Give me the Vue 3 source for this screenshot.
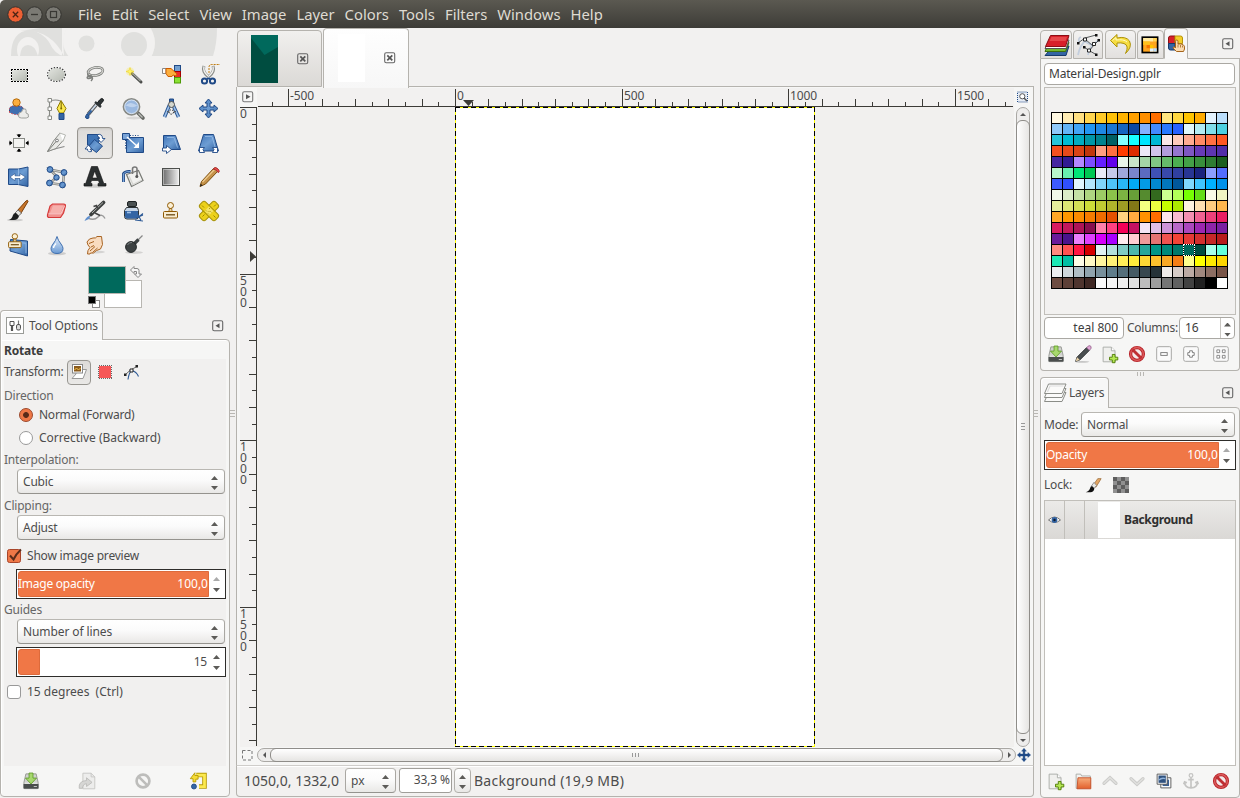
<script setup>
const menus = ['File', 'Edit', 'Select', 'View', 'Image', 'Layer', 'Colors', 'Tools', 'Filters', 'Windows', 'Help']

const blue = 'fill="url(#gBlue)" stroke="#204a87"'
const stampTop = '<circle cx="11.500" cy="6.500" r="3" fill="#fbf0d6" stroke="#8f5902"/><path d="M10.500 9.500h2l1 4h-4z" fill="#e9d3a0" stroke="#8f5902" stroke-width=".8"/><rect x="4.500" y="12.500" width="14" height="6.500" rx="1" fill="#f8ecd0" stroke="#8f5902"/><path d="M7 15.800h9" stroke="#6b4a12" stroke-width="1.300"/>'

const icons = {
  rectSelect: '<rect x="4" y="6" width="17" height="13" fill="#fff"/><rect x="5" y="7" width="15" height="11" fill="url(#gGrey)"/><path d="M4 6.500h17M4 18.500h17M4.500 6v13M20.500 6v13" stroke="#000" stroke-dasharray="2 1" shape-rendering="crispEdges"/>',
  ellipseSelect: '<ellipse cx="11.500" cy="11.500" rx="9" ry="7" fill="url(#gGrey)" stroke="#fff"/><ellipse cx="11.500" cy="11.500" rx="9" ry="7" fill="none" stroke="#333" stroke-dasharray="1.400 1.500" stroke-width="1.100"/>',
  lasso: '<ellipse cx="12.500" cy="8.500" rx="7.500" ry="4" fill="none" stroke="#7d7f7c" stroke-width="2.600" transform="rotate(-10 12.500 8.500)"/><ellipse cx="12.500" cy="8.500" rx="7.500" ry="4" fill="none" stroke="#dcdcd8" stroke-width="1" transform="rotate(-10 12.500 8.500)"/><path d="M5 10c-1 3 1 4 3 4s2 2 0 4M7 12.500c-3 .5-4 3-1 3s4-3 1-3" fill="none" stroke="#7d7f7c" stroke-width="1.500"/>',
  wand: '<path d="M11 10.500l9 8.500" stroke="#4b4d4a" stroke-width="3" stroke-linecap="round"/><path d="M11.500 10.500l8 7.500" stroke="#a5a7a2" stroke-width="1.100"/><circle cx="9" cy="8.500" r="4" fill="#fce94f" opacity=".35"/><path d="M9 4.500l1 3 3 1-3 1-1 3-1-3-3-1 3-1z" fill="#fff36b" stroke="#e8cf1c" stroke-width=".5"/>',
  byColor: '<rect x="15.500" y="2.500" width="6" height="6" fill="#729fcf" stroke="#204a87"/><rect x="15.500" y="8.500" width="6" height="6" fill="#ef2929" stroke="#a40000"/><rect x="15.500" y="14.500" width="6" height="5.500" fill="#8ae234" stroke="#4e9a06"/><path d="M3.500 5.500h3.500v5h-3.500z" fill="#fff" stroke="#888"/><path d="M7 5.500h5l6 5.500-1 2-3-1-1 1.500H9L7 10.500z" fill="#fcaf3e" stroke="#ce5c00"/>',
  scissors: '<path d="M7 3c-1.500 4 1 8 4 10.500M16 3c1.500 4-1 8-4 10.500" fill="none" stroke="#8b8d89" stroke-width="3"/><path d="M7 3.500c-1 4 1 7 4 9.500M16 3.500c1 4-1 7-4 9.500" fill="none" stroke="#f2f2f0" stroke-width="1.400"/><path d="M12 10V4q0-2.500 3-2.500h8" fill="none" stroke="#c17d11" stroke-dasharray="2 1"/><circle cx="7.500" cy="18" r="2.600" fill="none" stroke="#204a87" stroke-width="2"/><circle cx="15.500" cy="18" r="2.600" fill="none" stroke="#204a87" stroke-width="2"/><path d="M10 15.500h3" stroke="#204a87" stroke-width="2"/>',
  fgSelect: '<path d="M2.500 15.500v-4q1-2.500 5-2.500h4q4 0 5 3v5q-7 2-14-1.500z" fill="#3f6fb0" stroke="#c4404a" stroke-dasharray="1.500 1.500"/><path d="M2.500 15.500v-4q1-2.500 5-2.500h4q4 0 5 3" fill="none" stroke="#204a87" stroke-dasharray="1.500 1.500" stroke-dashoffset="1.500"/><circle cx="9.500" cy="5.500" r="3.700" fill="#fcaf3e" stroke="#b46a0c"/><path d="M11.500 19q-.5-4 3-4 1-4.500 4-3 1 1 .5 4 3 0 2.500 4-1 1.500-7 1-3 0-3-2z" fill="#ececea" stroke="#a0a29e"/>',
  paths: '<path d="M4.500 3.500v17M5 3.500q11-2 12 3" fill="none" stroke="#888a85" stroke-width="1.100"/><path d="M3 1.500h3.500v3.500H3zM3 10h3.500v3.500H3zM3 19h3.500v3.500H3z" fill="#fff" stroke="#888a85"/><path d="M16 3.500l-4 8 2.500 4.500h4l2.500-4.500z" fill="#fce94f" stroke="#8f7a00"/><path d="M16.200 5v6" stroke="#7a6800"/><circle cx="16.200" cy="11.500" r="1" fill="#7a6800"/><path d="M14 16.500h5v6h-5z" fill="#3465a4" stroke="#204a87"/>',
  picker: '<path d="M13.500 7l3-4q2-2.500 3.500-1t-1 3.500l-3 3.500z" fill="#2e3436" stroke="#15191a"/><path d="M12 5l6 5" stroke="#2e3436" stroke-width="2.400"/><path d="M13 8l-8 9.500" stroke="#555" stroke-width="3.600"/><path d="M13 8l-8 9.500" stroke="#c9d8e8" stroke-width="1.800"/><path d="M8.500 13.500l-3.500 4" stroke="#3465a4" stroke-width="2"/><path d="M4 17q-3 4 0 4.500t1.500-3.500z" fill="#3465a4" stroke="#204a87"/>',
  zoom: '<ellipse cx="13" cy="21" rx="8" ry="1.500" fill="#000" opacity=".1"/><path d="M17 16l5 5" stroke="#666864" stroke-width="3.600" stroke-linecap="round"/><path d="M17.500 16.500l4 4" stroke="#bcbeb9" stroke-width="1.200"/><circle cx="10.500" cy="9.800" r="8" fill="#9bb9e0" stroke="#888a85" stroke-width="1.800"/><circle cx="10.500" cy="9.800" r="6.800" fill="none" stroke="#dfe9f5" stroke-width=".9"/><path d="M4.800 8.500q4-5 11.400 0-4 3.500-11.400 0z" fill="#c8daf0" opacity=".8"/>',
  measure: '<path d="M10.500 2h4v6h-4z" fill="#3465a4" stroke="#204a87"/><path d="M10.500 8L5.500 20M14 8l5.500 12" stroke="#2d5a96" stroke-width="3.600"/><path d="M10.500 8L5.500 20M14 8l5.500 12" stroke="#9fc0e8" stroke-width="1.600"/><path d="M8 14.500q4.500 2.500 9 0" fill="none" stroke="#555"/><circle cx="12.500" cy="7.500" r="3" fill="#d3d7cf" stroke="#555"/><circle cx="12.300" cy="15" r="2.200" fill="#eee" stroke="#333" stroke-dasharray="1.500 1"/>',
  move: `<path d="M11.500 2l3.500 4h-2v4h4V8l4 3.500-4 3.500v-2h-4v4h2l-3.500 4L8 17h2v-4H6v2l-4-3.500L6 8v2h4V6H8z" ${blue}/>`,
  align: '<rect x="6.500" y="7.500" width="11" height="9" fill="#f4f4f2" stroke="#888a85"/><path d="M12 3v3M12 18v3M2 12h3M19 12h3" stroke="#000" stroke-width="1.200"/><path d="M12 6.500l-2.500-3h5zM12 17.500l-2.500 3h5zM5.500 12l-3-2.500v5zM18.500 12l3-2.500v5z" fill="#000"/>',
  crop: '<path d="M2.500 20.500l5-2 12-3" stroke="#888" stroke-width="1.200" fill="none"/><path d="M2.500 20.500l6-10.500L15 2l3.500 7-7.500 8.500z" fill="#e9e9e6" stroke="#8a8c87"/><path d="M2.500 20.500l9-10.500" stroke="#7e807b"/><circle cx="12" cy="9.500" r="1.400" fill="#fff" stroke="#777"/><path d="M14.500 2l6 2-2.500 6.500" fill="#fff" stroke="#b5b7b2"/>',
  rotate: `<path d="M4.500 3.500h11.500v7l-3 5-8.500-1.500z" fill="#3f74b5" stroke="#204a87"/><path d="M11.500 8.500l8 6.500-6 6.500-8-6z" ${blue}/><path d="M14.500 3.500q5-1 5 4h2.500l-4 4-3.500-4h2q0-2-2-2zM8.500 20.500q-4 1-4-2.500H2l3.500-4 3.500 4H7q0 1 1.500 1z" fill="#fff" stroke="#204a87" stroke-width=".9"/>`,
  scale: `<path d="M5.500 6.500h17v15h-17z" ${blue}/><path d="M9 4.500h9M4.500 9v9" stroke="#204a87" stroke-dasharray="1 1.500"/><path d="M1.500 2.500h7v6h-7z" fill="#7aa4d8" stroke="#204a87"/><path d="M6 6l11 10" stroke="#fff" stroke-width="1.500"/><path d="M12.500 17h5.500v-6z" fill="#fff"/>`,
  shear: `<path d="M4.500 4.500h12l5 14h-17z" ${blue}/><path d="M8 6.500h7l3.500 10" fill="none" stroke="#8db4e2"/><path d="M3.500 17h4v-2.500l5 4-5 4V20h-4z" fill="#fff" stroke="#204a87" stroke-width=".9"/>`,
  perspective: `<path d="M6.500 3.500h10l5 16.500h-20z" ${blue}/><path d="M8 5.500h7l3.500 12" fill="none" stroke="#8db4e2"/><path d="M2.500 16.500h5l-1.500 2 1.500 3H2.500zM20.500 16.500h-5l1.500 2-1.500 3h5z" fill="#fff" stroke="#204a87" stroke-width=".9"/>`,
  flip: `<path d="M1.500 4h10l9.500-2v19.500L11 19.500H1.500z" ${blue}/><path d="M11.500 4v15.500" stroke="#8db4e2"/><path d="M8 8.500v2.300h5V8.500l5.500 3.500-5.500 3.800v-2.300H8v2.300L3 12z" fill="#fff" stroke="#204a87" stroke-width=".6"/>`,
  cage: `<path d="M5 4.500l14 3-1 12.500-13-2L12 12z" fill="none" stroke="#888a85" stroke-width="2.600"/><path d="M5 4.500l14 3-1 12.500-13-2L12 12z" fill="none" stroke="#ddd" stroke-width=".8"/><g ${blue}><circle cx="5" cy="4.500" r="2.900"/><circle cx="19" cy="7.500" r="2.900"/><circle cx="11.500" cy="12.500" r="2.700"/><circle cx="4.500" cy="18" r="2.900"/><circle cx="17.500" cy="20" r="2.900"/></g>`,
  text: '<ellipse cx="12" cy="21" rx="11" ry="1.800" fill="#000" opacity=".15"/><path d="M8.500 1.500h6l6.300 17H23V21h-8v-2.500h1.500l-1-3h-7l-1 3H9V21H1v-2.500h1.700zM11.700 6l-2.400 7h5z" fill="#2b2f30" stroke="#111" stroke-width=".6" fill-rule="evenodd"/>',
  bucket: '<path d="M2.500 17V8.500q2-2.500 7-2" fill="none" stroke="#204a87" stroke-width="2.800"/><path d="M2.500 17V8.500q2-2.500 7-2" fill="none" stroke="#7aa4d8" stroke-width="1"/><path d="M5.500 9.500L17.500 5.500l4.500 10L10.500 21.500z" fill="#f1f1ef" stroke="#777974" stroke-width="1.200"/><path d="M8 11l4 8.500 8-4" stroke="#d5d5d2" stroke-width="1.300" fill="none"/><path d="M11.500 9V4q0-2 2.300-2T16 4v7" fill="none" stroke="#777" stroke-width="1.600"/><circle cx="15.800" cy="11.500" r="1.500" fill="#555"/>',
  gradient: '<rect x="3.500" y="3.500" width="17" height="17" fill="url(#gBlend)" stroke="#4d4f4c"/><rect x="4.500" y="4.500" width="15" height="15" fill="none" stroke="#fff" opacity=".4"/>',
  pencil: '<path d="M3 21.500l1.500-5L17 3q3-1 4.500 2.500L8.500 19z" fill="#c4924a" stroke="#7a4d0c"/><path d="M5.500 17L17.500 4.500" stroke="#eecb8e" stroke-width="1.200"/><path d="M16 4q2.500-3 5 0t0 3.500q-1-3-5-3.500z" fill="#ef4a4a" stroke="#a33"/><path d="M3 21.500l.8-2.700 1.800 1.800z" fill="#222"/>',
  brush: '<ellipse cx="8" cy="21" rx="8" ry="1.300" fill="#000" opacity=".15"/><path d="M10 12L19 2q2-1.500 2 .5L13.500 15z" fill="#c9762b" stroke="#7a3e08"/><path d="M8 14l3-3 3.500 3-3 3z" fill="#e3e3e0" stroke="#777"/><path d="M2 21q3-1 4-5 1-2.500 3-2l3 3q-1 4-5 4z" fill="#1b1e1f"/>',
  lockBrush: '<path d="M11 12L17 3.500h4.500L14.500 15z" fill="#e3a766" stroke="#9a6a35"/><path d="M8.500 13.500l3.500-5 3.500 4-3.500 4z" fill="#e9e9e6" stroke="#777"/><path d="M1 21.500q5-2 6-6 1-2.500 3-1.500l2.500 2.500q-1 5-5 5z" fill="#111"/>',
  eraser: '<path d="M7.500 5h11q2.500 0 1.800 2.500L18.500 14l-3 4.500H4.500q-2.500 0-2-2.500L5 7z" fill="#f0918e" stroke="#d63a3a" stroke-width="1.200"/><path d="M8 6.500h10.500l-3 7.500H5z" fill="#f6b0ac"/><path d="M3.500 14.800h12.500L19.500 7" fill="none" stroke="#fbd3d1" stroke-width=".9"/>',
  airbrush: '<path d="M5 19q6 3 10-1t7 1.500" fill="none" stroke="#999" stroke-width="1.400"/><path d="M8 15.500L20.500 3.500" stroke="#3d403f" stroke-width="3.800" stroke-linecap="round"/><path d="M9 14L20 3.500" stroke="#b4b6b2" stroke-width="1"/><path d="M10.500 7.500l3-1 1 3M12 14l5 2.500" stroke="#444" stroke-width="1.600" fill="none"/><path d="M1.500 22q2.500-5.500 6-5l-1.500 3z" fill="#5f8fcd"/>',
  ink: '<rect x="6.500" y="2.500" width="9" height="5" rx="1.500" fill="#4a5152" stroke="#1d2223"/><path d="M5.500 8.500h11l1 3v6q0 2.500-2.500 2.500H6q-2.500 0-2.500-2.500v-6z" fill="#c8d6e6" stroke="#2e3436"/><path d="M4 12h13v5.500q0 2-2 2H6q-2 0-2-2z" fill="#3465a4"/><path d="M6 13.500h4" stroke="#9fc0e8" stroke-width="1.600"/><path d="M15 19l7-3M17 15.500l3 6M14 21l8 1M22 14.500l-5 4" stroke="#2d5a96" stroke-width="1.100"/>',
  stamp: stampTop,
  heal: '<g stroke="#a8930a" fill="#ecd11b"><rect x="1" y="8" width="22" height="8" rx="2.500" transform="rotate(-45 12 12)"/><rect x="1" y="8" width="22" height="8" rx="2.500" transform="rotate(45 12 12)"/></g><path d="M12 7.500l4.500 4.500-4.500 4.500L7.500 12z" fill="#f4e366"/><path d="M9 11.500l.8.800M12 9l.8.800M11.500 12l.8.800M13.500 12.500l.8.800M11 14.500l.8.800M5 6.500l2 2M16.500 16.500l2 2M5.500 17.500l2-2M17 7.500l2-2" stroke="#a08a00"/>',
  perspClone: `<path d="M3.500 6.500L20.500 8v15L3 18z" ${blue}/><path d="M13 9.500l6 .8v10" fill="none" stroke="#8db4e2"/><g transform="translate(-2.500 -2.500) scale(.9)">${stampTop}</g>`,
  blur: '<ellipse cx="12" cy="20.500" rx="9" ry="1.800" fill="#000" opacity=".15"/><path d="M12 3.500q1 4 4 7.500 2 2.500 2 4.500 0 5-6 5t-6-5q0-2 2-4.500 3-3.500 4-7.500z" fill="url(#gDrop)" stroke="#3f6faf"/><path d="M8.500 15q0-2 2.500-4.500" stroke="#fff" stroke-width="1.300" fill="none"/>',
  smudge: '<ellipse cx="13" cy="19" rx="9" ry="1.500" fill="#000" opacity=".12"/><path d="M4 9q2-4 6-4 3 .5 4-1.500h4.500l1 8-2 4.500-4 1.500-3 2.500H7.500l-.5 1H4.500l.5-3.500 2-3-2-2.500z" fill="#f9dcc0" stroke="#a86423"/><path d="M8 14l3-1.500M7 18l5-4.500M9.500 19.500l5-4.500M6 10.500l5-2" stroke="#a86423"/>',
  dodge: '<ellipse cx="13" cy="19.500" rx="9" ry="1.500" fill="#000" opacity=".12"/><path d="M12 12l9.500-9.500" stroke="#888" stroke-width="1.200"/><path d="M12 12l5.500-5.500" stroke="#3c4142" stroke-width="3.200"/><circle cx="10" cy="14" r="5.400" fill="#3c4142" stroke="#222627"/><path d="M6.500 12q1.500-3 4.500-2.500" stroke="#7d8283" fill="none"/>',

  save: '<g transform="translate(1.700 1) scale(.86 .92)"><path d="M5.500 3.500h13l2.500 10v6.500q0 1-1 1h-16q-1 0-1-1v-6.500z" fill="#d0d2ce" stroke="#8d8f8a"/><path d="M2.500 15.500h19V21H2.500z" fill="#4a4e4d"/><path d="M4 14.500h16" stroke="#eee"/><path d="M15.500 18.500h4" stroke="#ddd"/><path d="M9.500 2.500h5v6h4.500L12 15.500 5 8.500h4.500z" fill="#a7d86e" stroke="#5c9a22"/></g>',
  restore: '<path d="M7.500 3.500h9l4 4v13h-13z" fill="#ededec" stroke="#c6c6c4"/><path d="M16.500 3.500v4h4" fill="none" stroke="#c6c6c4"/><path d="M3.500 20q-1-8 8-8.500V8.500l6 5-6 4.500v-3q-4 0-4.500 5z" fill="#d6d6d4" stroke="#bcbcba"/>',
  noGrey: '<circle cx="12" cy="12" r="7" fill="none" stroke="#bdbdbb" stroke-width="2.900"/><path d="M7.500 7.500l9 9" stroke="#bdbdbb" stroke-width="2.800"/>',
  reset: '<path d="M9 5.500h9v12.500h-6" fill="none" stroke="#b79b06" stroke-width="5"/><path d="M9 5.500h9v12.500h-6" fill="none" stroke="#fce94f" stroke-width="3"/><path d="M2.500 9.500L7.500 3v3h3.500v4H8.500v3H5.500V9.500z" fill="#f5dc35" stroke="#b79b06"/><circle cx="6.500" cy="18" r="2.700" fill="#3465a4" stroke="#204a87"/>',
  edit: '<ellipse cx="11" cy="20.500" rx="8" ry="1" fill="#000" opacity=".2"/><path d="M4 20l1.500-4.500L16 5l3 3L8.500 18.500z" fill="#4a4f50" stroke="#25292a"/><path d="M4 20l1.500-4.500 3 3z" fill="#e8d2a8"/><path d="M16 5q3-3.500 4.500-1.500T19 8z" fill="#e2a8d8" stroke="#9b6b93"/>',
  newDoc: '<path d="M4.500 4.500h9l4 4v12h-13z" fill="#f0f0ee" stroke="#a9aba6"/><path d="M13.500 4.500v4h4" fill="#fff" stroke="#a9aba6"/><path d="M13 11.500h3v3h3v3h-3v3h-3v-3h-3v-3h3z" transform="translate(1.500 1)" fill="#b5e853" stroke="#4e7a06"/>',
  noRed: '<circle cx="12" cy="12" r="7" fill="#f3e9e9" stroke="#b8242a" stroke-width="3.600"/><circle cx="12" cy="12" r="7" fill="none" stroke="#dc5a5a" stroke-width="1.600"/><path d="M7 7l10 10" stroke="#bf2f33" stroke-width="3.200"/>',
  zoomOut: '<rect x="4" y="4" width="16" height="16" rx="2" fill="#fafafa" stroke="#a3a3a0"/><rect x="8.500" y="10.500" width="7" height="3" fill="#fff" stroke="#777"/>',
  zoomIn: '<rect x="4" y="4" width="16" height="16" rx="2" fill="#fafafa" stroke="#a3a3a0"/><path d="M10.500 8.500h3v2h2v3h-2v2h-3v-2h-2v-3h2z" fill="#fff" stroke="#777"/>',
  zoomFit: '<rect x="4" y="4" width="16" height="16" rx="2" fill="#fafafa" stroke="#a3a3a0"/><path d="M7.500 10.500v-3h3v3zM13.500 10.500v-3h3v3zM7.500 16.500v-3h3v3zM13.500 16.500v-3h3v3z" fill="#fff" stroke="#777" stroke-width=".9"/>',
  folder: '<path d="M4.500 20V4.500h5l1 2h9.500V19z" fill="#f3f3f1" stroke="#a9aba6"/><path d="M6.500 8.500h14v12H5.500z" fill="url(#gOrange)" stroke="#c4502a"/>',
  up: '<path d="M5.500 14.500l6.500-6 6.500 6" fill="none" stroke="#cbcbc9" stroke-width="3.600" stroke-linecap="round"/><path d="M5.500 14.500l6.500-6 6.500 6" fill="none" stroke="#e0e0de" stroke-width="1.600" stroke-linecap="round"/>',
  down: '<path d="M5.500 9.500l6.500 6 6.500-6" fill="none" stroke="#cbcbc9" stroke-width="3.600" stroke-linecap="round"/><path d="M5.500 9.500l6.500 6 6.500-6" fill="none" stroke="#e0e0de" stroke-width="1.600" stroke-linecap="round"/>',
  duplicate: '<path d="M8.500 8.500h11v11h-11z" fill="#fff" stroke="#555"/><path d="M10.500 10.500h7v7h-7z" fill="#3b5f92"/><path d="M4.500 4.500h11v11h-11z" fill="#fff" stroke="#555"/><path d="M6 6h8v8H6z" fill="#30527f"/><path d="M6.500 11q3-3 7-1.500" stroke="#8fb3dc" stroke-width="1.500" fill="none"/>',
  anchor: '<path d="M12 8v11M9 10.500h6M5 13q0 6 7 6.500 7-.5 7-6.500M4 15.500l1-2.500 2.500 1M20 15.500L19 13l-2.500 1" fill="none" stroke="#c4c4c2" stroke-width="1.800"/><circle cx="12" cy="6" r="2" fill="none" stroke="#c4c4c2" stroke-width="1.400"/>',

  layersRed: '<path d="M4.500 18.500L7 13h18l-3 9.500H1z" fill="#3465a4" stroke="#173a6b"/><path d="M1 18.500l4-9h20l-3.500 9z" fill="#73b832" stroke="#3c6f0a"/><path d="M1 15.500L5.500 7H25l-3 8.500z" fill="#fff" stroke="#555"/><path d="M1.500 13.500l5-11H25l-3.500 11z" fill="#d8202a" stroke="#8c0e14"/><path d="M7.500 4H23l-1.500 4H5.500z" fill="#ec5a5a" opacity=".7"/>',
  nodes: '<path d="M3 22q2-10 8-15M9 7q6 6 10 4 3-2 5-5M4 9q-1-4 2-5M13 22q1-6 4-9" fill="none" stroke="#c3cedd" stroke-width="1.800"/><path d="M3 10l7-5 11-3M10 6l8 7 6-6M9 14l5 3.500 7 4M14 18l5-6" fill="none" stroke="#2e3436" stroke-width=".8"/><g fill="#fff" stroke="#111" stroke-width=".9"><path d="M8.500 5h3v3h-3zM17.500 9.500h3v3h-3zM12.500 16h3v3h-3z"/></g><path d="M2 9h2.500v2.500H2zM20 1h2.500v2.500H20zM22.500 6H25v2.500h-2.500zM8 13h2.500v2.500H8zM20 20.500h2.500V23H20z" fill="#111"/>',
  undo: '<path d="M1.500 7.500L8 1.500v3.500q9-2 12.500 3 3 6-4 12.500 4-8-1.500-10-3-1-7-.5V14z" fill="#f6dd42" stroke="#ad9208"/><path d="M3.500 7.500L7 4.500V7q8-1 11 2" fill="none" stroke="#fffbc0"/>',
  history: '<g transform="translate(1.600 2.500) scale(.85)"><rect x="2" y="2" width="18" height="18" fill="#ffa51f" stroke="#000" stroke-width="2"/><path d="M3 3h4v4H3zM7 3h4v4H7zM11 3h4v4h-4z" fill="#ffeaa2"/><path d="M15 3h4v4h-4z" fill="#ffd75a"/><path d="M7 11h4v4H7z" fill="#f57400"/><path d="M3 7h8v4H3z" fill="#ffc21c"/><path d="M11 15h4v4h-4z" fill="#e3f2fd"/><path d="M15 15h4v4h-4z" fill="#bbdefb"/><path d="M11 11h4v4h-4z" fill="#ffc400"/></g>',
  paletteHand: '<g transform="translate(0 2)"><path d="M2.500 9.500V4q0-2 2-2H9v7.500z" fill="#d8202a" stroke="#8c0e14"/><path d="M9 2h5.500q2 0 2 2v5.500H9z" fill="#f3cf2a" stroke="#b89407"/><path d="M2.500 9.500H9V16H4.500q-2 0-2-2z" fill="#3465a4" stroke="#173a6b"/><path d="M9.500 14V7.500q0-1.500 1.200-1.500T12 7.500V10q3-.5 5 .5t1.500 4.500l-1 2.500h-7l-3.500-3.500q0-2 2.500-.5z" fill="#fbdcb2" stroke="#a5641b"/><path d="M12 10.500v3M14.500 11v2.500M16.500 11.500v2" stroke="#a5641b" stroke-width=".8"/></g>',
  layersGrey: '<g fill="#fbfbfa" stroke="#8b8d88"><path d="M.5 18.500l4-9H22l-4 9z"/><path d="M.5 14.500l4-9H22l-4 9z"/><path d="M.5 10.500l4-9.500H22l-4 9.500z"/></g><path d="M3.500 9L6 3h13.500" fill="none" stroke="#ddd" stroke-width="1.200"/>',
  toolOpts: '<rect x=".5" y=".5" width="17" height="16" fill="#fff" stroke="#999b97"/><path d="M4 4.500h4v4H4z" fill="#fff" stroke="#555"/><path d="M6 9v5" stroke="#555" stroke-width="2.200"/><path d="M12.500 3.500v4" stroke="#777" stroke-width="1.200"/><rect x="10.500" y="7.500" width="4" height="5.500" rx="1.500" fill="#ddd" stroke="#555"/>',
}

const tools = ['rectSelect', 'ellipseSelect', 'lasso', 'wand', 'byColor', 'scissors', 'fgSelect', 'paths', 'picker', 'zoom', 'measure', 'move', 'align', 'crop', 'rotate', 'scale', 'shear', 'perspective', 'flip', 'cage', 'text', 'bucket', 'gradient', 'pencil', 'brush', 'eraser', 'airbrush', 'ink', 'stamp', 'heal', 'perspClone', 'blur', 'smudge', 'dodge']
const paletteTabs = [['layersRed', 26], ['nodes', 26], ['undo', 24], ['history', 22], ['paletteHand', 20]]
const paletteActions = ['save', 'edit', 'newDoc', 'noRed', 'zoomOut', 'zoomIn', 'zoomFit']
const layerActions = ['newDoc', 'folder', 'up', 'down', 'duplicate', 'anchor', 'noRed']

const palette = (
  'fff8e1 ffecb3 ffe082 ffd54f ffca28 ffc107 ffb300 ffa000 ff8f00 ff6f00 ffe57f ffd740 ffc400 ffab00 ' +
  'e3f2fd bbdefb 90caf9 64b5f6 42a5f5 2196f3 1e88e5 1976d2 1565c0 0d47a1 82b1ff 448aff 2979ff 2962ff ' +
  'e0f7fa b2ebf2 80deea 4dd0e1 26c6da 00bcd4 00acc1 0097a7 00838f 006064 84ffff 18ffff 00e5ff 00b8d4 ' +
  'fbe9e7 ffccbc ffab91 ff8a65 ff7043 ff5722 f4511e e64a19 d84315 bf360c ff9e80 ff6e40 ff3d00 dd2c00 ' +
  'ede7f6 d1c4e9 b39ddb 9575cd 7e57c2 673ab7 5e35b1 512da8 4527a0 311b92 b388ff 7c4dff 651fff 6200ea ' +
  'e8f5e9 c8e6c9 a5d6a7 81c784 66bb6a 4caf50 43a047 388e3c 2e7d32 1b5e20 b9f6ca 69f0ae 00e676 00c853 ' +
  'e8eaf6 c5cae9 9fa8da 7986cb 5c6bc0 3f51b5 3949ab 303f9f 283593 1a237e 8c9eff 536dfe 3d5afe 304ffe ' +
  'e1f5fe b3e5fc 81d4fa 4fc3f7 29b6f6 03a9f4 039be5 0288d1 0277bd 01579b 80d8ff 40c4ff 00b0ff 0091ea ' +
  'f1f8e9 dcedc8 c5e1a5 aed581 9ccc65 8bc34a 7cb342 689f38 558b2f 33691e ccff90 b2ff59 76ff03 64dd17 ' +
  'f9fbe7 f0f4c3 e6ee9c dce775 d4e157 cddc39 c0ca33 afb42b 9e9d24 827717 f4ff81 eeff41 c6ff00 aeea00 ' +
  'fff3e0 ffe0b2 ffcc80 ffb74d ffa726 ff9800 fb8c00 f57c00 ef6c00 e65100 ffd180 ffab40 ff9100 ff6d00 ' +
  'fce4ec f8bbd0 f48fb1 f06292 ec407a e91e63 d81b60 c2185b ad1457 880e4f ff80ab ff4081 f50057 c51162 ' +
  'f3e5f5 e1bee7 ce93d8 ba68c8 ab47bc 9c27b0 8e24aa 7b1fa2 6a1b9a 4a148c ea80fc e040fb d500f9 aa00ff ' +
  'ffebee ffcdd2 ef9a9a e57373 ef5350 f44336 e53935 d32f2f c62828 b71c1c ff8a80 ff5252 ff1744 d50000 ' +
  'e0f2f1 b2dfdb 80cbc4 4db6ac 26a69a 009688 00897b 00796b 00695c 004d40 a7ffeb 64ffda 1de9b6 00bfa5 ' +
  'fffde7 fff9c4 fff59d fff176 ffee58 ffeb3b fdd835 fbc02d f9a825 f57f17 ffff8d ffff00 ffea00 ffd600 ' +
  'eceff1 cfd8dc b0bec5 90a4ae 78909c 607d8b 546e7a 455a64 37474f 263238 ' +
  'efebe9 d7ccc8 bcaaa4 a1887f 8d6e63 795548 6d4c41 5d4037 4e342e 3e2723 ' +
  'fafafa f5f5f5 eeeeee e0e0e0 bdbdbd 9e9e9e 757575 616161 424242 212121 000000 ffffff'
).split(' ')
const selectedColor = palette.indexOf('00695c')

// 50 image units are 16.67 screen pixels at 33.3 %
const STEP = 50 / 3
const hTicks = []
for (let k = -11; k <= 33; k++) {
  const x = Math.round(198 + k * STEP)
  hTicks.push({ x, h: k % 10 === 0 ? 17 : k % 2 === 0 ? 7 : 4, label: k % 10 === 0 ? String(k * 50) : '' })
}
const vTicks = []
for (let k = 0; k <= 38; k++) {
  const y = Math.round(k * STEP)
  vTicks.push({ y, w: k % 10 === 0 ? 17 : k % 2 === 0 ? 7 : 4, label: k % 10 === 0 ? String(k * 50) : '' })
}
</script>

<template>
  <div class="app">
    <svg class="defs" width="0" height="0">
      <defs>
        <linearGradient id="gBlue" x1="0" y1="0" x2="1" y2="1"><stop offset="0" stop-color="#3f74b8" /><stop offset=".5" stop-color="#6d9dd3" /><stop offset="1" stop-color="#3465a4" /></linearGradient>
        <linearGradient id="gGrey" x1="0" y1="0" x2="1" y2="1"><stop offset="0" stop-color="#e4e6e1" /><stop offset="1" stop-color="#b4b8b0" /></linearGradient>
        <linearGradient id="gBlend"><stop offset="0" stop-color="#6a6a6a" /><stop offset="1" stop-color="#f4f4f4" /></linearGradient>
        <linearGradient id="gDrop" x1="0" y1="0" x2="0" y2="1"><stop offset="0" stop-color="#e6f0fb" /><stop offset="1" stop-color="#6a9ad4" /></linearGradient>
        <linearGradient id="gOrange" x1="0" y1="0" x2="0" y2="1"><stop offset="0" stop-color="#f7ad7b" /><stop offset="1" stop-color="#e2602c" /></linearGradient>
      </defs>
    </svg>

    <header class="titlebar">
      <svg class="wm" width="64" height="28" viewBox="0 0 64 28">
        <circle cx="15.500" cy="14.500" r="7.700" fill="#ec5f33" stroke="#33322e" />
        <path d="M12.800 11.800l5.400 5.400M18.200 11.800l-5.400 5.400" stroke="#4a2313" stroke-width="1.300" />
        <circle cx="34.500" cy="14.500" r="7.700" fill="#7b7a74" stroke="#33322e" />
        <path d="M31 14.500h7" stroke="#393834" stroke-width="1.300" />
        <circle cx="53.500" cy="14.500" r="7.700" fill="#7b7a74" stroke="#33322e" />
        <rect x="50.500" y="11.500" width="6" height="6" fill="none" stroke="#393834" stroke-width="1.200" />
      </svg>
      <nav class="menus"><span v-for="m in menus" :key="m">{{ m }}</span></nav>
    </header>

    <main class="work">
      <aside class="left">
        <svg class="wilber" width="236" height="28" viewBox="0 0 236 28">
          <path d="M11 28Q11 3 30 2Q42 4 49 14Q55 27 64 28z" fill="#e0e0de" />
          <path d="M20 3Q50 0 64 28Q62 4 68 0H40zM62 28V0H217Q217 16 213 28z" fill="#e0e0de" />
          <ellipse cx="28" cy="22" rx="11" ry="13" fill="#f2f1f0" />
          <path d="M20 28q1-11 8-11t10 11z" fill="#e0e0de" />
          <circle cx="86.500" cy="13" r="23.500" fill="#f2f1f0" />
          <circle cx="86.500" cy="15.500" r="8" fill="#e0e0de" />
          <circle cx="128" cy="15" r="27" fill="#f2f1f0" />
          <circle cx="134" cy="17" r="13" fill="#e0e0de" />
        </svg>
        <div class="tools">
          <button v-for="t in tools" :key="t" :class="{ on: t === 'rotate' }">
            <svg width="24" height="24" viewBox="0 0 24 24" v-html="icons[t]"></svg>
          </button>
        </div>
        <div class="colors">
          <svg width="56" height="44" viewBox="0 0 56 44">
            <rect x="16.500" y="14.500" width="37" height="27" fill="#fff" stroke="#b8b6b1" />
            <rect x=".5" y=".5" width="37" height="27" fill="#00695c" stroke="#b8b6b1" />
            <path d="M42.500 4l3.500-3.500V2.500h3q2 0 2 2V8h2.500L50 11.500 46.500 8h2V5.500H46v2z" fill="#f7f7f7" stroke="#888" />
            <rect x="4.500" y="34.500" width="7" height="7" fill="#fff" stroke="#888" />
            <rect x=".5" y="30.500" width="7" height="7" fill="#000" stroke="#777" />
          </svg>
        </div>

        <section class="dock opts">
          <div class="tabrow">
            <div class="dtab">
              <svg width="19" height="18" viewBox="0 0 19 18" v-html="icons.toolOpts"></svg>
              <span class="t-opts">Tool Options</span>
            </div>
            <svg class="collapse" width="12" height="12" viewBox="0 0 12 12"><rect x=".7" y=".7" width="10" height="10" rx="1.500" fill="none" stroke="#666" stroke-width="1.100" /><path d="M7.500 3.300v5L3.500 5.800z" fill="#555" /></svg>
          </div>
          <div class="dbody">
            <h3>Rotate</h3>
            <div class="form">
              <div class="transform">
                <span class="t-transform">Transform:</span>
                <b class="tbtn"><svg width="18" height="18" viewBox="0 0 18 18"><path d="M6 11V6.500h10.500L13 15.500H2z" fill="#fff" stroke="#999" /><rect x="2.500" y="1.500" width="10" height="8.500" fill="#fff" stroke="#888" /><rect x="4" y="3" width="7" height="5.500" fill="#8a5a1c" /><path d="M4.500 7l2-2 2 2 2-2" stroke="#f6c34c" fill="none" /></svg></b>
                <svg class="tsel" width="14" height="14" viewBox="0 0 14 14"><rect x="0" y="0" width="14" height="14" fill="#f2f1f0" /><rect x="1" y="1" width="12" height="12" fill="#f65757" /><rect x=".5" y=".5" width="13" height="13" fill="none" stroke="#666" stroke-dasharray="1 1" shape-rendering="crispEdges" /></svg>
                <svg class="tpath" width="18" height="18" viewBox="0 0 18 18"><path d="M1.500 11.500l5-4.500L13 3.500" stroke="#555" fill="none" stroke-width=".9" /><path d="M4 16.500q1-7 3.500-9 5 1 7 6" fill="none" stroke="#2d5a96" stroke-width="1.100" /><path d="M0 10.500h2.500V13H0zM11.500 2H14v2.500h-2.500z" fill="#222" /><path d="M6 6h3v3H6z" fill="#fff" stroke="#222" /></svg>
              </div>
              <p class="lbl l1">Direction</p>
              <div class="radio r1"><i class="dot on"></i><span>Normal (Forward)</span></div>
              <div class="radio r2"><i class="dot"></i><span class="t-corr">Corrective (Backward)</span></div>
              <p class="lbl l2">Interpolation:</p>
              <div class="select ind"><span>Cubic</span><i class="spin"></i></div>
              <p class="lbl l3">Clipping:</p>
              <div class="select ind"><span>Adjust</span><i class="spin"></i></div>
              <div class="check c1">
                <svg width="18" height="18" viewBox="0 0 18 18"><rect x="1.500" y="2.500" width="13" height="13" rx="2" fill="#ef7847" stroke="#a8452a" /><path d="M4 8.500l3.500 4Q10 7 15 2.500" fill="none" stroke="#5a2c1a" stroke-width="2" /></svg>
                <span>Show image preview</span>
              </div>
              <div class="scale ind"><div class="fill"><span class="t-iop">Image opacity</span><span class="t-hund">100,0</span></div><i class="spin dis"></i></div>
              <p class="lbl l4">Guides</p>
              <div class="select ind"><span class="t-num">Number of lines</span><i class="spin"></i></div>
              <div class="scale ind lines"><div class="part"></div><span>15</span><i class="spin"></i></div>
              <div class="check c2"><i class="box"></i><span class="t-deg">15 degrees&nbsp; (Ctrl)</span></div>
            </div>
            <div class="foot">
              <svg v-for="n in ['save', 'restore', 'noGrey', 'reset']" :key="n" width="22" height="22" viewBox="0 0 24 24" v-html="icons[n]"></svg>
            </div>
          </div>
        </section>
        <i class="grip side"></i>
      </aside>

      <section class="center">
        <div class="imgtabs">
          <div class="itab">
            <svg width="27" height="48" viewBox="0 0 27 48"><path d="M0 0h27v48H0z" fill="#004d40" /><path d="M0 0h27v12l-13.500 8L0 3z" fill="#00695c" /></svg>
            <svg class="x" width="12" height="12" viewBox="0 0 12 12"><rect x=".7" y=".7" width="10" height="10" rx="1.500" fill="none" stroke="#666" stroke-width="1.100" /><path d="M3.300 3.300l5 5M8.300 3.300l-5 5" stroke="#555" stroke-width="1.700" /></svg>
          </div>
          <div class="itab on">
            <svg width="27" height="48" viewBox="0 0 27 48"><path d="M0 0h27v48H0z" fill="#fff" /></svg>
            <svg class="x" width="12" height="12" viewBox="0 0 12 12"><rect x=".7" y=".7" width="10" height="10" rx="1.500" fill="none" stroke="#666" stroke-width="1.100" /><path d="M3.300 3.300l5 5M8.300 3.300l-5 5" stroke="#555" stroke-width="1.700" /></svg>
          </div>
          <div class="rest"></div>
        </div>
        <div class="view">
          <div class="corner"><svg width="12" height="12" viewBox="0 0 12 12"><rect x=".7" y=".7" width="10" height="10" rx="1.500" fill="none" stroke="#777" stroke-width="1.100" /><path d="M4 3.300v5l4.500-2.500z" fill="#555" /></svg></div>
          <svg class="hruler" width="757" height="19" viewBox="0 0 757 19" shape-rendering="crispEdges">
            <path d="M1 18.500H756" stroke="#3c3b37" />
            <g v-for="t in hTicks" :key="t.x">
              <path v-if="t.x < 756 && t.x > 1" :d="`M${t.x + .5} ${18 - t.h}V18`" stroke="#3c3b37" />
              <text v-if="t.label" :x="t.x + 2" y="12">{{ t.label }}</text>
            </g>
            <path d="M206 12h11l-5.500 6z" fill="#3c3b37" shape-rendering="auto" />
          </svg>
          <div class="zoomfit"><svg width="11" height="12" viewBox="0 0 11 12"><rect x=".5" y="1" width="10" height="10" fill="#e6ecf5" stroke="#204a87" stroke-dasharray="1 1" /><circle cx="5.300" cy="5.300" r="2.600" fill="#fff" stroke="#555" /><path d="M7 7l3 3" stroke="#555" stroke-width="1.500" /></svg></div>

          <svg class="vruler" width="17" height="640" viewBox="0 0 17 640" shape-rendering="crispEdges">
            <path d="M16.500 0V639" stroke="#3c3b37" />
            <g v-for="t in vTicks" :key="t.y">
              <path :d="`M${16 - t.w} ${t.y + .5}H16`" stroke="#3c3b37" />
              <text v-for="(d, i) in t.label" :key="i" x="0" :y="t.y + 11 + i * 11">{{ d }}</text>
            </g>
            <path d="M10 144v11l6-5.500z" fill="#3c3b37" shape-rendering="auto" />
          </svg>
          <div class="canvas">
            <svg width="361" height="640" viewBox="0 0 361 640" shape-rendering="crispEdges">
              <rect x=".5" y=".5" width="359" height="639" fill="#fff" stroke="#ff0" />
              <path d="M0 .5H360M0 639.500H360M.5 0V640M359.500 0V640" stroke="#000" stroke-dasharray="5 3" />
            </svg>
          </div>
          <div class="sb v"><i class="a up"></i><div class="thumb"></div><i class="a dn"></i></div>

          <div class="quick"><svg width="11" height="11" viewBox="0 0 11 11"><rect x=".5" y=".5" width="9.500" height="9.500" fill="none" stroke="#777" stroke-dasharray="3 2" /></svg></div>
          <div class="sb h"><i class="a lf"></i><div class="thumb"></div><i class="a rt"></i></div>
          <div class="nav"><svg width="14" height="14" viewBox="1.500 1.500 20 20"><path d="M11.500 2l3.500 4h-2.200v4.200H17V8l4 3.500-4 3.500v-2.200h-4.200V17H15l-3.500 4L8 17h2.200v-4.200H6V15l-4-3.500L6 8v2.200h4.200V6H8z" fill="#204a87" stroke="#204a87" stroke-width=".6" /></svg></div>
        </div>
        <footer class="status">
          <span class="coords">1050,0, 1332,0</span>
          <div class="select unit"><span>px</span><i class="spin"></i></div>
          <div class="zoomval">33,3 %</div>
          <div class="spinbtn"><i class="spin"></i></div>
          <span class="msg">Background (19,9 MB)</span>
        </footer>
        <i class="grip side"></i>
      </section>

      <aside class="right">
        <section class="dock pal">
          <div class="ptabs">
            <div v-for="([n, w], i) in paletteTabs" :key="n" :class="['ptab', 'p' + i]"><svg :width="w" height="24" :viewBox="`0 0 ${w} 24`" v-html="icons[n]"></svg></div>
            <div class="prest"><svg class="collapse" width="12" height="12" viewBox="0 0 12 12"><rect x=".7" y=".7" width="10" height="10" rx="1.500" fill="none" stroke="#666" stroke-width="1.100" /><path d="M7.500 3.300v5L3.500 5.800z" fill="#555" /></svg></div>
          </div>
          <div class="pbody">
            <div class="entry name"><span>Material-Design.gplr</span></div>
            <div class="pframe">
              <div class="swatches"><i v-for="(c, i) in palette" :key="i" :class="{ sel: i === selectedColor }" :style="{ background: '#' + c }"></i></div>
            </div>
            <div class="prow">
              <div class="entry teal"><span>teal 800</span></div>
              <span class="t-cols">Columns:</span>
              <div class="entry cols"><span>16</span><div class="sp"><i class="spin"></i></div></div>
            </div>
            <div class="actions"><svg v-for="n in paletteActions" :key="n" width="22" height="22" viewBox="0 0 24 24" v-html="icons[n]"></svg></div>
          </div>
        </section>
        <i class="grip top"></i>
        <section class="dock layers">
          <div class="tabrow">
            <div class="dtab">
              <svg width="24" height="20" viewBox="0 0 24 20" v-html="icons.layersGrey"></svg>
              <span class="t-layers">Layers</span>
            </div>
            <svg class="collapse" width="12" height="12" viewBox="0 0 12 12"><rect x=".7" y=".7" width="10" height="10" rx="1.500" fill="none" stroke="#666" stroke-width="1.100" /><path d="M7.500 3.300v5L3.500 5.800z" fill="#555" /></svg>
          </div>
          <div class="dbody">
            <div class="mode"><span class="t-mode">Mode:</span><div class="select"><span>Normal</span><i class="spin"></i></div></div>
            <div class="scale"><div class="fill"><span class="t-op">Opacity</span><span class="t-hund">100,0</span></div><i class="spin dis"></i></div>
            <div class="lock">
              <span class="t-lock">Lock:</span>
              <svg width="18" height="18" viewBox="0 0 24 24" v-html="icons.lockBrush"></svg>
              <svg class="checker" width="16" height="16" viewBox="0 0 16 16"><path d="M0 0h16v16H0z" fill="#5e5e5e" /><path d="M4 0h4v4H4zM12 0h4v4h-4zM0 4h4v4H0zM8 4h4v4H8zM4 8h4v4H4zM12 8h4v4h-4zM0 12h4v4H0zM8 12h4v4H8z" fill="#909090" /></svg>
            </div>
            <div class="tree">
              <div class="layer">
                <div class="eye"><svg width="13" height="10" viewBox="0 0 13 10"><path d="M.5 5Q6.500-1 12.500 5 6.500 10 .5 5z" fill="#fff" stroke="#777" /><circle cx="6.500" cy="5" r="2.900" fill="#3465a4" /><circle cx="6.500" cy="5" r="1.200" fill="#0b1a30" /></svg></div>
                <div class="link"></div>
                <div class="thumbnail"></div>
                <b>Background</b>
              </div>
            </div>
            <div class="actions"><svg v-for="n in layerActions" :key="n" width="22" height="22" viewBox="0 0 24 24" v-html="icons[n]"></svg></div>
          </div>
        </section>
      </aside>
    </main>
  </div>
</template>

<style>
html, body { background: #f2f1f0; overflow: hidden; }
</style>

<style scoped>
* { box-sizing: border-box; }
.app { width: 1240px; height: 798px; background: #f2f1f0; color: #4c4c4c; font: 12px/16px "Noto Sans", "Open Sans", sans-serif; letter-spacing: -.2px; white-space: nowrap; display: flex; flex-direction: column; overflow: hidden; }
.defs { position: absolute; }
svg { display: block; flex: none; overflow: visible; }
i { display: block; }
p, h3 { margin: 0; }

.titlebar { height: 28px; flex: none; display: flex; background: linear-gradient(#5b5951, #403f3a 90%, #3c3b37); color: #dfdbd2; border-radius: 5px 0 0 0; }
.menus { display: flex; gap: 10px; margin-left: 14px; font-size: 14.800px; line-height: 29px; letter-spacing: .01px; }

.work { flex: 1; display: flex; min-height: 0; }
.left { width: 236px; position: relative; display: flex; flex-direction: column; }
.wilber { overflow: hidden; }
.tools { display: grid; grid-template-columns: repeat(6, 36px); grid-auto-rows: 32px; gap: 2px; margin: 3px 0 0 1px; }
.tools button { border: 1px solid transparent; background: none; padding: 0; display: flex; align-items: center; justify-content: center; border-radius: 4px; }
.tools button.on { border-color: #989691; background: linear-gradient(#dddbd9, #e9e8e6); box-shadow: inset 0 1px 2px #c8c6c3; }
.colors { margin: 5px 0 0 88px; height: 44px; }

.dock { display: flex; flex-direction: column; }
.tabrow { height: 30px; display: flex; position: relative; z-index: 1; }
.dtab { border: 1px solid #b5b3ae; border-bottom: 0; border-radius: 4px 4px 0 0; background: #f7f7f7; display: flex; align-items: center; margin-bottom: -1px; box-shadow: inset 1px 1px #fff; }
.tabrow .collapse { margin-left: auto; }
.dbody { border: 1px solid #b5b3ae; border-radius: 0 4px 4px 4px; background: #f6f6f5; flex: 1; display: flex; flex-direction: column; box-shadow: inset 1px 1px #fff; }
.opts { width: 230px; height: 487px; }
.opts .dtab { width: 103px; padding-left: 5px; gap: 4px; }
.opts .collapse { margin: 10px 6px 0 auto; }
.opts h3 { font-size: 12px; line-height: 19px; height: 19px; padding: 1px 0 0 3px; color: #3c3c3c; }
.form { margin: 0 3px; background: #f1f0ef; height: 407px; }
.transform { display: flex; height: 26px; align-items: center; }
.t-transform { width: 59px; }
.tbtn { width: 24px; height: 25px; margin-left: 4px; border: 1px solid #989691; border-radius: 4px; background: linear-gradient(#dddbd9, #e9e8e6); display: flex; align-items: center; justify-content: center; }
.tsel { margin-left: 7px; }
.tpath { margin-left: 12px; }
.lbl { height: 20px; line-height: 20px; color: #666; }
.l1 { padding-top: 1px; }
.radio { display: flex; align-items: center; height: 23px; padding-left: 15px; gap: 6px; }
.radio span { letter-spacing: -.25px; }
.radio .t-corr { letter-spacing: -.05px; }
.r1 { height: 19px; }
.r2 { height: 27px; }
.dot { width: 14px; height: 14px; border: 1px solid #999; border-radius: 50%; background: #fff; }
.dot.on { border-color: #9c4528; background: radial-gradient(circle, #5a2a18 0 2.500px, #ef7847 3.300px); }
.l2 { height: 18px; line-height: 17px; }
.l3 { height: 21px; line-height: 24px; }
.select { height: 25px; border: 1px solid #a9a7a2; border-color: #b9b7b2 #a9a7a2 #95938e; border-radius: 4px; background: linear-gradient(#fff, #fbfbfb 45%, #e9e8e6); display: flex; align-items: center; justify-content: space-between; padding: 0 6px 0 5px; color: #4c4c4c; }
.t-num { letter-spacing: -.1px; }
.ind { margin-left: 13px; width: 208px; }
.spin { width: 7px; height: 13px; flex: none; position: relative; }
.spin::before, .spin::after { content: ""; position: absolute; left: 0; width: 7px; height: 4px; background: #5c5b58; }
.spin::before { top: 1px; clip-path: polygon(50% 0, 100% 100%, 0 100%); }
.spin::after { bottom: -2px; clip-path: polygon(0 0, 100% 0, 50% 100%); }
.spin.dis::before { background: #aaa; }
.check { display: flex; align-items: center; }
.c1 { height: 29px; padding: 3px 0 0 2px; gap: 3px; }
.scale { height: 30px; border: 1px solid #2e2d2a; background: #fff; display: flex; align-items: center; padding: 1px; }
.scale.ind { width: 210px; margin-left: 12px; }
.fill { flex: 1; height: 26px; background: #f07746; border: 1px solid #dd6a3b; border-radius: 3px 0 0 3px; color: #fff; display: flex; align-items: center; justify-content: space-between; }
.t-iop, .t-op { margin-left: -1px; letter-spacing: -.25px; }
.t-hund { letter-spacing: 0; }
.scale .spin { margin: 0 4px 0 4px; height: 14px; }
.scale .spin::before { top: 0; }
.scale .spin::after { bottom: -1px; }
.l4 { height: 20px; line-height: 21px; }
.lines { margin-top: 3px; }
.part { width: 22px; height: 26px; background: #f07746; border: 1px solid #dd6a3b; border-radius: 3px 0 0 3px; margin-right: auto; }
.scale.lines > .spin { margin-left: 6px; }
.c2 { height: 30px; padding-left: 3px; gap: 6px; }
.t-deg { letter-spacing: 0; }
.box { width: 14px; height: 14px; border: 1px solid #999; border-radius: 3px; background: #fff; }
.foot { display: flex; height: 30px; align-items: center; padding-left: 19px; gap: 34px; }

.grip { background: repeating-linear-gradient(#b9b7b3 0 1px, transparent 1px 3px); }
.grip.side { position: absolute; width: 5px; height: 8px; right: 1px; top: 382px; }
.center .grip.side { right: -4px; }
.grip.top { width: 8px; height: 4px; margin: 1px 0 1px 97px; background: repeating-linear-gradient(90deg, #b9b7b3 0 1px, transparent 1px 3px); }

.center { width: 798px; position: relative; display: flex; flex-direction: column; }
.imgtabs { height: 59px; display: flex; align-items: flex-end; position: relative; z-index: 1; padding-left: 1px; }
.itab { width: 85px; height: 57px; border: 1px solid #b5b3ae; border-radius: 4px 4px 0 0; background: linear-gradient(#f1f0ee, #dbd9d6); display: flex; align-items: center; padding-left: 13px; gap: 19px; }
.itab.on { width: 86px; height: 60px; margin: 0 0 -1px 1px; border-bottom: 0; background: linear-gradient(#fefefe, #f7f7f7); padding: 0 0 2px 14px; }
.rest { flex: 1; height: 1px; background: #b5b3ae; }
.view { border: 1px solid #b5b3ae; border-top: 0; border-bottom: 0; flex: none; height: 678px; padding: 1px 3px 0 3px; display: grid; grid-template-columns: 17px 757px 17px; grid-template-rows: 19px 640px 18px; background: #f6f6f5; }
.corner { display: flex; align-items: flex-start; padding: 3px 0 0 2px; }
.hruler, .vruler { background: #f2f1f0; font-size: 12px; fill: #4c4c4c; letter-spacing: -.1px; overflow: hidden; }
.zoomfit { display: flex; align-items: flex-start; padding: 3px 0 0 3px; }
.canvas { background: #f1f0ee; padding-left: 198px; overflow: hidden; height: 640px; }
.sb { border: 1px solid #aaa8a4; border-radius: 7px; background: #eeedec; display: flex; }
.sb.v { width: 14px; height: 640px; margin-left: 2px; flex-direction: column; border-radius: 7px; }
.sb.h { height: 14px; width: 759px; margin-top: 1px; }
.sb .thumb { border: 1px solid #8f8d89; border-radius: 6px; flex: 1; }
.v .thumb { margin: 0 -1px; background: linear-gradient(90deg, #fff, #e6e5e3); position: relative; }
.h .thumb { margin: -1px 0; background: linear-gradient(#fff, #f3f2f1 50%, #e6e5e3); position: relative; }
.h .thumb::after { content: ""; position: absolute; left: 361px; top: 4px; width: 7px; height: 4px; background: repeating-linear-gradient(90deg, #999 0 1px, transparent 1px 3px); }
.v .thumb::after { content: ""; position: absolute; left: 4px; top: 302px; width: 4px; height: 7px; background: repeating-linear-gradient(#999 0 1px, transparent 1px 3px); }
.a { flex: none; display: flex; align-items: center; justify-content: center; width: 12px; height: 12px; }
.a::before { content: ""; border: 3px solid transparent; }
.a.up::before { border-bottom-color: #555; margin-top: -3px; }
.a.dn::before { border-top-color: #555; margin-top: 3px; }
.a.lf::before { border-right-color: #555; margin-left: -3px; }
.a.rt::before { border-left-color: #555; margin-left: 3px; }
.quick { display: flex; align-items: center; padding: 0 0 1px 2px; }
.nav { padding: 1px 0 0 3px; }
.status { height: 32px; border: 1px solid #b5b3ae; border-top-color: #cfcdca; border-radius: 0 0 4px 4px; display: flex; align-items: center; padding: 0 0 1px 7px; font-size: 14px; letter-spacing: 0; box-shadow: inset 0 1px #fff; }
.coords { width: 101px; }
.msg { letter-spacing: .26px; }
.unit { width: 51px; font-size: 12px; letter-spacing: 0; }
.zoomval { width: 53px; height: 25px; margin-left: 3px; border: 1px solid #a09e99; border-radius: 3px; background: #fff; font-size: 12px; letter-spacing: -.1px; line-height: 22px; text-align: right; padding-right: 1px; }
.spinbtn { width: 17px; height: 25px; margin: 0 3px 0 2px; border: 1px solid #b1afaa; border-radius: 4px; background: linear-gradient(#fff, #e9e8e6); display: flex; align-items: center; justify-content: center; }

.right { width: 200px; margin-left: 6px; display: flex; flex-direction: column; }
.ptabs { height: 31px; display: flex; align-items: flex-end; position: relative; z-index: 1; }
.ptab { height: 29px; border: 1px solid #b5b3ae; border-radius: 4px 4px 0 0; background: linear-gradient(#f4f3f2, #e2e0de); display: flex; align-items: center; justify-content: center; margin-right: 1px; }
.p0 { width: 32px; }
.p1 { width: 30px; }
.p2 { width: 31px; margin-left: 1px; }
.p3 { width: 27px; margin-right: 0; }
.p4 { width: 24px; height: 31px; margin: 0; background: #f7f7f7; border-bottom-color: #f7f7f7; }
.p0 svg { margin-left: 1px; }
.p3 svg { margin-left: -2px; }
.prest { flex: 1; height: 21px; border-bottom: 1px solid #b5b3ae; position: relative; display: flex; }
.prest .collapse { margin: 0 6px 0 auto; }
.pbody { height: 312px; border: 1px solid #b5b3ae; border-top: 0; border-radius: 0 0 4px 4px; background: #f6f6f5; padding: 4px 3px 0; }
.entry { border: 1px solid #aaa8a3; border-radius: 4px; background: #fff; height: 22px; line-height: 20px; padding: 0 5px; color: #3c3c3c; }
.name { width: 191px; padding-left: 4px; }
.pframe { margin-top: 2px; height: 228px; width: 192px; border: 1px solid #c1bfba; background: #f2f1f0; padding: 24px 0 0 6px; }
.swatches { width: 177px; height: 177px; background: #000; display: grid; grid-template-columns: repeat(16, 10px); grid-auto-rows: 10px; gap: 1px; padding: 1px; }
.sel { outline: 1px dotted #fff; }
.prow { display: flex; align-items: center; margin-top: 2px; }
.teal { width: 80px; text-align: right; letter-spacing: 0; }
.t-cols { margin-left: 3px; width: 52px; letter-spacing: -.25px; }
.cols { width: 56px; display: flex; justify-content: space-between; padding: 0 0 0 5px; letter-spacing: 0; }
.sp { width: 14px; border-left: 1px solid #c9c7c3; display: flex; align-items: center; justify-content: center; }
.actions { display: flex; padding: 4px 0 0 1px; gap: 5px; }
.actions svg:last-child { margin-left: 3px; }

.layers { height: 421px; }
.layers .dtab { width: 69px; padding-left: 3px; gap: 1px; }
.layers .collapse { margin: 10px 6px 0 auto; }
.layers .dbody { padding: 4px 3px 0; box-shadow: none; }
.mode { display: flex; align-items: center; }
.t-mode { width: 37px; letter-spacing: -.25px; }
.mode .select { width: 154px; }
.layers .scale { margin-top: 3px; width: 192px; }
.lock { height: 30px; display: flex; align-items: center; }
.t-lock { width: 41px; }
.checker { margin-left: 10px; }
.tree { border: 1px solid #c1bfba; background: #fff; height: 266px; width: 192px; }
.layer { height: 38px; display: flex; align-items: center; background: linear-gradient(#ebeae8, #dad8d5); color: #2f2f2f; }
.layer b { letter-spacing: -.35px; }
.eye, .link { width: 20px; height: 38px; border-right: 1px solid #c1bfba; display: flex; align-items: center; justify-content: center; }
.thumbnail { width: 22px; height: 36px; background: #fff; margin: 0 4px 0 13px; }
</style>
